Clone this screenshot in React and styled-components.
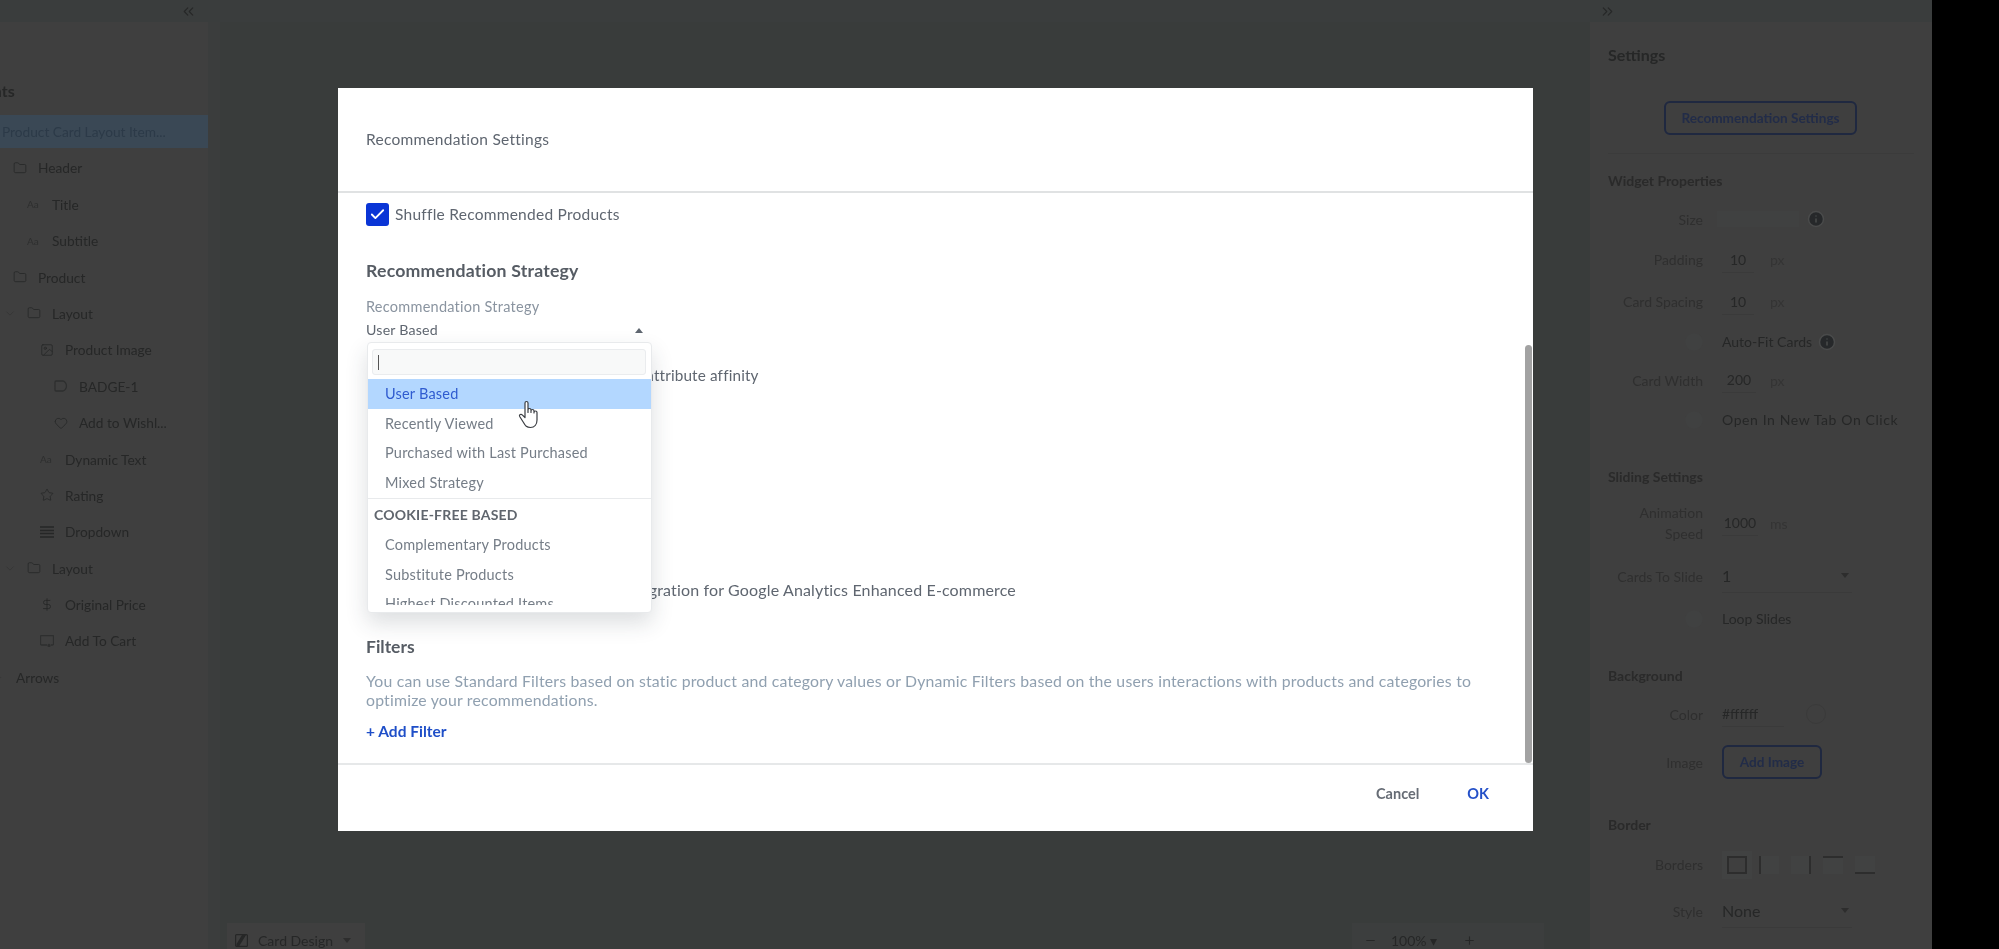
import React from 'react'
import styled, { createGlobalStyle } from 'styled-components'
import {
  Check,
  ChevronDown,
  ChevronRight,
  ChevronsLeft,
  ChevronsRight,
  DollarSign,
  Folder,
  Heart,
  Image as ImageIcon,
  Info,
  Minus,
  Plus,
  Star,
} from 'lucide-react'

const FONT = `Lato, "Open Sans", "Liberation Sans", sans-serif`
const INK = '#262727'

const GlobalStyle = createGlobalStyle`
  html, body { margin: 0; padding: 0; background: #000; }
  body { font-family: ${FONT}; }
  * { box-sizing: border-box; }
`

const Page = styled.div`
  position: relative;
  display: flex;
  width: 1999px;
  height: 949px;
  overflow: hidden;
  background: #3e3f3f;
`

const Workspace = styled.div`
  display: flex;
  flex-direction: column;
  width: 1932px;
  height: 100%;
  filter: blur(0.55px);
`

const TopBar = styled.div`
  display: flex;
  align-items: center;
  justify-content: space-between;
  flex: 0 0 22px;
  padding: 0 316px 0 180px;
  background: #3a3d3d;
  color: ${INK};
`

const Main = styled.div`
  display: flex;
  flex: 1;
  min-height: 0;
`

const LeftPanel = styled.aside`
  flex: 0 0 208px;
  padding-top: 58px;
  background: #3f3f3f;
  overflow: hidden;
`

const PanelTitle = styled.h2`
  margin: 0 0 13px -76px;
  font-size: 16px;
  line-height: 22px;
  font-weight: 700;
  color: ${INK};
  white-space: nowrap;
`

const TreeRow = styled.div`
  display: flex;
  align-items: center;
  gap: 11px;
  height: 33px;
  margin-bottom: 3.4px;
  padding-left: ${(p) => p.$indent}px;
  background: ${(p) => (p.$active ? '#3a4855' : 'transparent')};
  color: ${(p) => (p.$active ? '#2c3a48' : INK)};
  font-size: 13.7px;
  white-space: nowrap;

  svg { flex: 0 0 14px; }
`

const RowToggle = styled.span`
  display: flex;
  width: 14px;
  margin: 0 -11px 0 -14px;
  transform: translateX(-10px);
  color: #333;
`

const AaIcon = styled.span`
  flex: 0 0 14px;
  font-size: 10px;
  color: #2e2f2f;
`

const Canvas = styled.main`
  display: flex;
  flex: 1;
  align-items: flex-end;
  justify-content: space-between;
  padding: 0 46px 0 19px;
  background: #393c3b;
  box-shadow: inset 12px 0 0 #3b3d3d;
`

const CanvasTab = styled.div`
  display: flex;
  align-items: center;
  gap: 10px;
  width: 138px;
  height: 26px;
  padding: 8px 8px 0;
  background: #3f3f3f;
  color: ${INK};
  font-size: 14px;
`

const ZoomBar = styled.div`
  display: flex;
  align-items: center;
  width: 192px;
  height: 26px;
  padding: 8px 12px 0;
  background: #3c3e3e;
  color: ${INK};
  font-size: 14px;
`

const ZoomValue = styled.span`
  margin: 0 26px 0 14px;
  white-space: nowrap;
`

const RightPanel = styled.aside`
  flex: 0 0 342px;
  padding: 23px 0 0 18px;
  background: #3f3f3f;
  color: ${INK};
  overflow: hidden;
`

const SettingsTitle = styled.h2`
  margin: 0 0 36px;
  font-size: 16px;
  line-height: 20px;
  font-weight: 700;
`

const OutlineButton = styled.button`
  display: block;
  width: ${(p) => p.$width}px;
  height: 34px;
  margin: ${(p) => (p.$center ? '0 0 0 56px' : '0')};
  border: 2px solid #1f2840;
  border-radius: 6px;
  background: transparent;
  color: #222c48;
  font: 700 13.6px ${FONT};
`

const SectionRule = styled.div`
  height: 1px;
  margin: 18px 18px 0 0;
  background: #3b3b3b;
`

const SectionTitle = styled.h3`
  margin: ${(p) => p.$top}px 0 ${(p) => p.$bottom}px;
  font-size: 14px;
  line-height: 20px;
  font-weight: 700;
  color: #2a2a2a;
`

const Field = styled.div`
  display: grid;
  grid-template-columns: 95px 1fr;
  column-gap: 19px;
  align-items: center;
  height: ${(p) => p.$h}px;
`

const FieldLabel = styled.label`
  text-align: right;
  font-size: 14px;
  line-height: 21px;
  color: #2f2f2f;
`

const Control = styled.div`
  display: flex;
  align-items: center;
  gap: ${(p) => p.$gap ?? 10}px;
  font-size: 14px;
`

const ToggleLabel = styled.span`
  font-size: 14px;
  letter-spacing: ${(p) => (p.$wide ? '0.6px' : '0')};
  color: ${INK};
`

const ToggleGhost = styled.span`
  justify-self: end;
  width: 18px;
  height: 18px;
  border-radius: 50%;
  background: #404141;
`

const SizeBox = styled.span`
  width: 82px;
  height: 16px;
  margin-left: -5px;
  background: #404141;
`

const ValueInput = styled.span`
  display: inline-block;
  width: ${(p) => p.$width}px;
  margin-top: 4px;
  padding-bottom: 4px;
  border-bottom: 1px solid #3a3a3a;
  text-align: ${(p) => p.$align ?? 'center'};
  color: ${INK};
`

const Unit = styled.span`
  color: #343434;
`

const SelectValue = styled.span`
  display: flex;
  align-items: center;
  justify-content: space-between;
  width: 130px;
  margin-top: 6px;
  padding: 0 3px 7px 0;
  border-bottom: 1px solid #3a3a3a;
  color: ${INK};
`

const CaretDown = styled.i`
  width: 0;
  height: 0;
  border-left: 4px solid transparent;
  border-right: 4px solid transparent;
  border-top: 5px solid #2d2d2d;
`

const Swatch = styled.span`
  width: 20px;
  height: 20px;
  margin-left: 4px;
  border: 1px solid #3a3a3a;
  border-radius: 50%;
`

const BorderPicker = styled.div`
  display: flex;
  align-items: center;
  gap: 12px;
  margin-left: 5px;
`

const BorderCell = styled.span`
  display: block;
  width: 20px;
  height: 18px;
  background: ${(p) => (p.$on ? 'transparent' : '#414242')};
  border-style: solid;
  border-color: #2d2d2d;
  border-width: ${(p) => p.$w};
  box-shadow: ${(p) => (p.$on ? '0 0 0 5px #414242' : 'none')};
`

const BlackStrip = styled.div`
  position: relative;
  flex: 0 0 67px;
  background: #000;
`

/* the dialog and its dropdown float over the page */
const Modal = styled.section`
  position: absolute;
  left: 338px;
  top: 88px;
  display: flex;
  flex-direction: column;
  width: 1195px;
  height: 743px;
  background: #fff;
  color: #5f6670;
  filter: blur(0.35px);
`

const ModalHeader = styled.header`
  display: flex;
  align-items: center;
  flex: 0 0 105px;
  padding: 0 28px 2px;
  border-bottom: 2px solid #e0e2e3;
  font-size: 15.5px;
  letter-spacing: 0.25px;
`

const ModalBody = styled.div`
  position: relative;
  flex: 1;
  padding: 10px 28px 0;
  overflow: hidden;
`

const ScrollThumb = styled.div`
  position: absolute;
  top: 152px;
  right: 1px;
  bottom: 0;
  width: 7px;
  border-radius: 4px;
  background: #a2a2a2;
`

const CheckRow = styled.label`
  display: flex;
  align-items: center;
  gap: 6px;
  font-size: 15.5px;
  line-height: 21px;
  letter-spacing: 0.25px;
`

const CheckBox = styled.span`
  display: flex;
  align-items: center;
  justify-content: center;
  width: 23px;
  height: 23px;
  border-radius: 3px;
  background: #0a35d6;
  color: #fff;
`

const StrategyHeading = styled.h3`
  margin: 34px 0 0;
  font-size: 17.7px;
  line-height: 22px;
  font-weight: 700;
  color: #565c64;
  letter-spacing: 0.2px;
`

const FieldCaption = styled.div`
  margin-top: 16px;
  font-size: 14.5px;
  line-height: 18px;
  letter-spacing: 0.25px;
  color: #8a94a0;
`

const SelectWrap = styled.div`
  position: relative;
  display: flex;
  align-items: center;
  justify-content: space-between;
  width: 286px;
  height: 18px;
  margin-top: 4px;
  padding-right: 9px;
  font-size: 14.2px;
  letter-spacing: 0.2px;
`

const CaretUp = styled.i`
  width: 0;
  height: 0;
  margin-top: 3px;
  border-left: 4px solid transparent;
  border-right: 4px solid transparent;
  border-bottom: 5px solid #5f6670;
`

const Dropdown = styled.div`
  position: absolute;
  z-index: 2;
  top: 22px;
  left: 1px;
  width: 285px;
  height: 271px;
  padding-top: 6px;
  border: 1px solid #e8eaec;
  border-radius: 4px;
  background: #fff;
  box-shadow: 0 10px 22px rgba(40, 50, 60, 0.16);
`

const SearchBox = styled.div`
  display: flex;
  align-items: center;
  width: 274px;
  height: 26px;
  margin: 0 0 4px 4px;
  padding-left: 5px;
  border: 1px solid #eaecee;
  border-radius: 3px;
  background: #f8f9f9;

  &::before {
    content: '';
    width: 1px;
    height: 15px;
    background: #555;
  }
`

const OptionList = styled.div`
  height: 226px;
  overflow: hidden;
`

const Option = styled.div`
  display: flex;
  align-items: center;
  height: 29.5px;
  padding-left: 17px;
  background: ${(p) => (p.$selected ? '#b3d7ff' : 'transparent')};
  color: ${(p) => (p.$selected ? '#2f5bd0' : '#757d87')};
  font-size: 14.5px;
  letter-spacing: 0.2px;
  white-space: nowrap;
`

const OptionGroup = styled.div`
  display: flex;
  align-items: center;
  height: 32px;
  margin-top: 1px;
  padding: 0 0 1px 6px;
  border-top: 1px solid #e8eaec;
  font-size: 14px;
  font-weight: 700;
  color: #60666e;
`

const HiddenLine = styled.div`
  margin-top: ${(p) => p.$top}px;
  padding-left: ${(p) => p.$indent}px;
  font-size: ${(p) => p.$size}px;
  line-height: 20px;
  letter-spacing: 0.15px;
  white-space: nowrap;
`

const FilterHeading = styled.h3`
  margin: 36px 0 0;
  font-size: 17.5px;
  line-height: 22px;
  font-weight: 700;
  color: #565c64;
`

const FilterText = styled.p`
  width: 1112px;
  margin: 14px 0 0;
  font-size: 15.8px;
  line-height: 18.6px;
  letter-spacing: 0.2px;
  color: #90a0b0;
`

const AddFilter = styled.a`
  display: block;
  margin-top: 12px;
  font-size: 15.5px;
  line-height: 20px;
  font-weight: 700;
  color: #1f4fc8;
`

const ModalFooter = styled.footer`
  display: flex;
  align-items: center;
  justify-content: flex-end;
  gap: 48px;
  flex: 0 0 68px;
  padding: 0 44px 10px 0;
  border-top: 2px solid #e6e8e9;
`

const FooterButton = styled.button`
  padding: 0;
  border: 0;
  background: none;
  color: ${(p) => (p.$primary ? '#2450c8' : '#666c75')};
  font: 700 14.5px ${FONT};
`

const Cursor = styled.svg`
  position: absolute;
  z-index: 3;
  left: 518px;
  top: 400px;
  width: 22px;
  height: 29px;
`

const TREE = [
  { text: 'Product Card Layout Item...', indent: 2, active: true },
  { text: 'Header', indent: 13, icon: <Folder size={14} strokeWidth={1.4} /> },
  { text: 'Title', indent: 27, icon: <AaIcon>Aa</AaIcon> },
  { text: 'Subtitle', indent: 27, icon: <AaIcon>Aa</AaIcon> },
  { text: 'Product', indent: 13, icon: <Folder size={14} strokeWidth={1.4} /> },
  { text: 'Layout', indent: 27, open: true, icon: <Folder size={14} strokeWidth={1.4} /> },
  { text: 'Product Image', indent: 40, icon: <ImageIcon size={14} strokeWidth={1.4} /> },
  { text: 'BADGE-1', indent: 54, icon: <BadgeGlyph /> },
  { text: 'Add to Wishl...', indent: 54, icon: <Heart size={14} strokeWidth={1.4} /> },
  { text: 'Dynamic Text', indent: 40, icon: <AaIcon>Aa</AaIcon> },
  { text: 'Rating', indent: 40, icon: <Star size={14} strokeWidth={1.4} /> },
  { text: 'Dropdown', indent: 40, icon: <DropdownGlyph /> },
  { text: 'Layout', indent: 27, open: true, icon: <Folder size={14} strokeWidth={1.4} /> },
  { text: 'Original Price', indent: 40, icon: <DollarSign size={15} strokeWidth={1.5} /> },
  { text: 'Add To Cart', indent: 40, icon: <CartGlyph /> },
  { text: 'Arrows', indent: 16, closed: true },
]

const OPTIONS = ['User Based', 'Recently Viewed', 'Purchased with Last Purchased', 'Mixed Strategy']
const COOKIE_FREE = ['Complementary Products', 'Substitute Products', 'Highest Discounted Items']
const BORDER_SIDES = ['2px', '0 0 0 2px', '0 2px 0 0', '2px 0 0 0', '0 0 2px 0']

function BadgeGlyph() {
  return (
    <svg width="14" height="12" viewBox="0 0 14 12" fill="none" stroke="#2e2f2f" strokeWidth="1.3">
      <path d="M9 1H2a1 1 0 0 0-1 1v8a1 1 0 0 0 1 1h7c1.5 0 3.5-2.5 3.5-5S10.500 1 9 1Z" />
    </svg>
  )
}

function DropdownGlyph() {
  return (
    <svg width="14" height="12" viewBox="0 0 14 12" fill="none" stroke="#262727" strokeWidth="1.5">
      <path d="M0 1h14M0 4.500h14M0 7.500h14M0 11h14" />
    </svg>
  )
}

function CartGlyph() {
  return (
    <svg width="14" height="12" viewBox="0 0 14 12" fill="none" stroke="#2e2f2f" strokeWidth="1.3">
      <path d="M7 10H1.500a1 1 0 0 1-1-1V1.500a1 1 0 0 1 1-1h11a1 1 0 0 1 1 1V9a1 1 0 0 1-1 1H11" />
      <circle cx="9" cy="10.500" r="1" fill="#2e2f2f" />
    </svg>
  )
}

function DesignGlyph() {
  return (
    <svg width="13" height="13" viewBox="0 0 13 13" fill="none" stroke="#262727" strokeWidth="1.2">
      <rect x="0.600" y="0.600" width="11.800" height="11.800" rx="1" />
      <path d="M4 12.500 11 1H7L1.500 10v2.500Z" fill="#262727" stroke="none" />
    </svg>
  )
}

function HandCursor() {
  return (
    <Cursor viewBox="0 0 22 29" fill="#fff" stroke="#3a3d42" strokeWidth="1.2" strokeLinejoin="round">
      <path d="M7 3a1.500 1.500 0 0 1 3 0v9.500V10a1.500 1.500 0 0 1 3 0v2.500V11a1.500 1.500 0 0 1 3 0v2V12.500a1.500 1.500 0 0 1 3 0V20c0 4.500-2.500 7.500-6.500 7.500S7.500 26 5.500 22.500L1.700 16.500c-.9-1.500 1.200-3 2.500-1.700L7 17.500Z" />
    </Cursor>
  )
}

function LeftTree() {
  return (
    <LeftPanel>
      <PanelTitle>Components</PanelTitle>
      {TREE.map((row) => (
        <TreeRow key={row.text + row.indent} $indent={row.indent} $active={row.active}>
          {row.open && (
            <RowToggle>
              <ChevronDown size={13} strokeWidth={1.4} />
            </RowToggle>
          )}
          {row.closed && (
            <RowToggle>
              <ChevronRight size={13} strokeWidth={1.4} />
            </RowToggle>
          )}
          {row.icon}
          {row.text}
        </TreeRow>
      ))}
    </LeftPanel>
  )
}

function SettingsPanel() {
  return (
    <RightPanel>
      <SettingsTitle>Settings</SettingsTitle>
      <OutlineButton $width={193} $center>Recommendation Settings</OutlineButton>
      <SectionRule />

      <SectionTitle $top={17} $bottom={8}>Widget Properties</SectionTitle>
      <Field $h={40}>
        <FieldLabel>Size</FieldLabel>
        <Control $gap={8}>
          <SizeBox />
          <Info size={18} fill="#26282a" stroke="#4a4b4b" />
        </Control>
      </Field>
      <Field $h={41}>
        <FieldLabel>Padding</FieldLabel>
        <Control $gap={16}><ValueInput $width={32}>10</ValueInput><Unit>px</Unit></Control>
      </Field>
      <Field $h={43}>
        <FieldLabel>Card Spacing</FieldLabel>
        <Control $gap={16}><ValueInput $width={32}>10</ValueInput><Unit>px</Unit></Control>
      </Field>
      <Field $h={37}>
        <ToggleGhost />
        <Control $gap={6}>
          <ToggleLabel>Auto-Fit Cards</ToggleLabel>
          <Info size={18} fill="#26282a" stroke="#4a4b4b" />
        </Control>
      </Field>
      <Field $h={40}>
        <FieldLabel>Card Width</FieldLabel>
        <Control $gap={14}><ValueInput $width={34}>200</ValueInput><Unit>px</Unit></Control>
      </Field>
      <Field $h={39}>
        <ToggleGhost />
        <ToggleLabel $wide>Open In New Tab On Click</ToggleLabel>
      </Field>

      <SectionTitle $top={28} $bottom={6}>Sliding Settings</SectionTitle>
      <Field $h={60}>
        <FieldLabel>Animation Speed</FieldLabel>
        <Control $gap={12}><ValueInput $width={36}>1000</ValueInput><Unit>ms</Unit></Control>
      </Field>
      <Field $h={47}>
        <FieldLabel>Cards To Slide</FieldLabel>
        <SelectValue>1<CaretDown /></SelectValue>
      </Field>
      <Field $h={37}>
        <ToggleGhost />
        <ToggleLabel>Loop Slides</ToggleLabel>
      </Field>

      <SectionTitle $top={29} $bottom={8}>Background</SectionTitle>
      <Field $h={40}>
        <FieldLabel>Color</FieldLabel>
        <Control $gap={18}><ValueInput $width={62} $align="left">#ffffff</ValueInput><Swatch /></Control>
      </Field>
      <Field $h={56}>
        <FieldLabel>Image</FieldLabel>
        <OutlineButton $width={100}>Add Image</OutlineButton>
      </Field>

      <SectionTitle $top={25} $bottom={10}>Border</SectionTitle>
      <Field $h={39}>
        <FieldLabel>Borders</FieldLabel>
        <BorderPicker>
          {BORDER_SIDES.map((w, i) => (
            <BorderCell key={w} $w={w} $on={i === 0} />
          ))}
        </BorderPicker>
      </Field>
      <Field $h={54}>
        <FieldLabel>Style</FieldLabel>
        <SelectValue>None<CaretDown /></SelectValue>
      </Field>
    </RightPanel>
  )
}

function RecommendationModal() {
  return (
    <Modal>
      <ModalHeader>Recommendation Settings</ModalHeader>
      <ModalBody>
        <ScrollThumb />
        <CheckRow>
          <CheckBox><Check size={17} strokeWidth={2.6} /></CheckBox>
          Shuffle Recommended Products
        </CheckRow>
        <StrategyHeading>Recommendation Strategy</StrategyHeading>
        <FieldCaption>Recommendation Strategy</FieldCaption>
        <SelectWrap>
          User Based
          <CaretUp />
          <Dropdown>
            <SearchBox />
            <OptionList>
              {OPTIONS.map((o, i) => (
                <Option key={o} $selected={i === 0}>{o}</Option>
              ))}
              <OptionGroup>COOKIE-FREE BASED</OptionGroup>
              {COOKIE_FREE.map((o) => (
                <Option key={o}>{o}</Option>
              ))}
            </OptionList>
          </Dropdown>
        </SelectWrap>
        <HiddenLine $top={27} $indent={18} $size={15.3}>Recommend products based on user's attribute affinity</HiddenLine>
        <HiddenLine $top={195} $indent={85} $size={16}>Enable data layer event integration for Google Analytics Enhanced E-commerce</HiddenLine>
        <FilterHeading>Filters</FilterHeading>
        <FilterText>
          You can use Standard Filters based on static product and category values or Dynamic Filters based on the users interactions with products and categories to optimize your recommendations.
        </FilterText>
        <AddFilter>+ Add Filter</AddFilter>
      </ModalBody>
      <ModalFooter>
        <FooterButton>Cancel</FooterButton>
        <FooterButton $primary>OK</FooterButton>
      </ModalFooter>
    </Modal>
  )
}

export default function App() {
  return (
    <>
      <GlobalStyle />
      <Page>
        <Workspace>
          <TopBar>
            <ChevronsLeft size={17} strokeWidth={1.6} />
            <ChevronsRight size={17} strokeWidth={1.6} />
          </TopBar>
          <Main>
            <LeftTree />
            <Canvas>
              <CanvasTab>
                <DesignGlyph />
                Card Design
                <CaretDown />
              </CanvasTab>
              <ZoomBar>
                <Minus size={13} />
                <ZoomValue>100% ▾</ZoomValue>
                <Plus size={13} />
              </ZoomBar>
            </Canvas>
            <SettingsPanel />
          </Main>
        </Workspace>
        <BlackStrip />
        <RecommendationModal />
        <HandCursor />
      </Page>
    </>
  )
}
